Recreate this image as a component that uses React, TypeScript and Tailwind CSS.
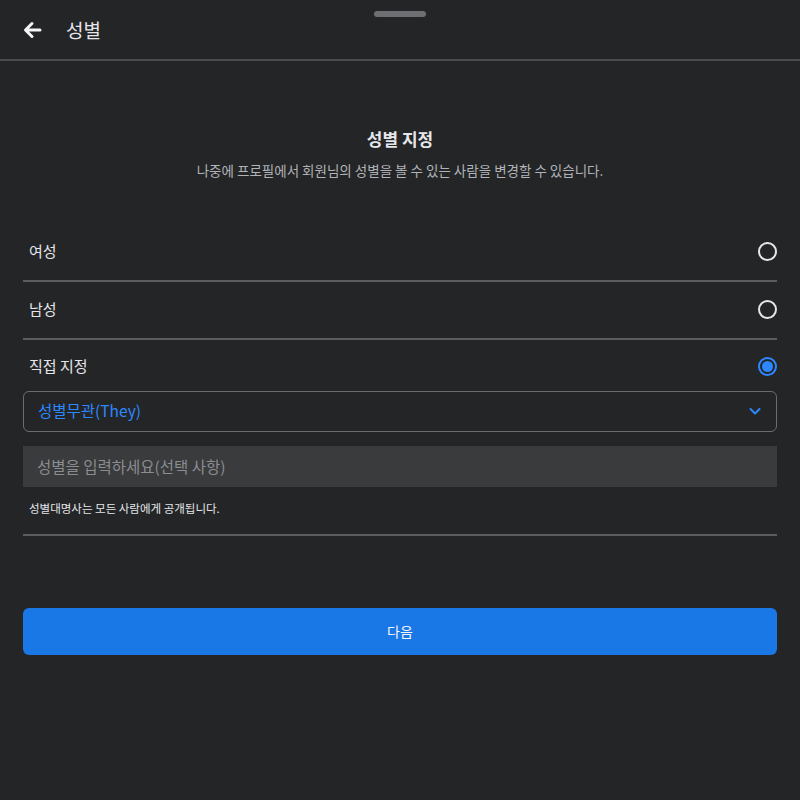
import { useState } from "react";

const options = ["여성", "남성", "직접 지정"];

const Radio = ({ checked }: { checked: boolean }) =>
  checked ? (
    <div className="w-[19px] h-[19px] rounded-full border-2 border-[#2d88ff] flex items-center justify-center">
      <div className="w-[11px] h-[11px] rounded-full bg-[#2d88ff]" />
    </div>
  ) : (
    <div className="w-[19px] h-[19px] rounded-full border-2 border-[#e4e6eb]" />
  );

const App = () => {
  const [selected, setSelected] = useState(2);

  return (
    <div
      className="w-full h-[800px] bg-[#242526] text-[#e4e6eb] flex flex-col"
      style={{ fontFamily: '"Noto Sans CJK KR", "Noto Sans", sans-serif' }}
    >
      {/* header */}
      <div className="relative h-[61px] border-b-2 border-[#4b4c4f] flex items-center px-[22px]">
        <div className="absolute top-[11px] left-[374px] w-[52px] h-[6px] rounded-full bg-[#6e6f72]" />
        <svg width="20" height="20" viewBox="0 0 20 20" className="mt-[1px]">
          <path
            d="M18 10H5M10 3.5L3.5 10L10 16.5"
            fill="none"
            stroke="#f5f6f7"
            strokeWidth="3"
            strokeLinecap="round"
            strokeLinejoin="round"
          />
        </svg>
        <h1 className="ml-[24px] text-[19px] leading-none text-[#e4e6eb]">성별</h1>
      </div>

      <div className="px-[23px] flex flex-col">
        {/* title */}
        <div className="pt-[69px] flex flex-col items-center">
          <h2 className="text-[17px] font-bold leading-none text-[#e4e6eb]">성별 지정</h2>
          <p className="mt-[17px] text-[13.5px] leading-none text-[#b0b3b8]">
            나중에 프로필에서 회원님의 성별을 볼 수 있는 사람을 변경할 수 있습니다.
          </p>
        </div>

        {/* options */}
        <div className="mt-[46px] flex flex-col">
          {options.map((label, i) => {
            const last = i === options.length - 1;
            return (
              <div
                key={label}
                onClick={() => setSelected(i)}
                className={`flex items-center justify-between pl-[6px] cursor-pointer ${
                  last ? "h-[51px] pt-[2px]" : "h-[58px] border-b-2 border-[#5b5c5f]"
                }`}
              >
                <span className="text-[15px] text-[#e4e6eb]">{label}</span>
                <Radio checked={selected === i} />
              </div>
            );
          })}
        </div>

        {/* custom */}
        <div className="flex flex-col">
          <div className="h-[41px] rounded-[6px] border border-[#6b6c6f] flex items-center justify-between px-[14px]">
            <span className="text-[15.5px] text-[#2d88ff]">성별무관(They)</span>
            <svg width="14" height="14" viewBox="0 0 14 14">
              <path
                d="M2.5 5L7 9.5L11.5 5"
                fill="none"
                stroke="#2d88ff"
                strokeWidth="2"
                strokeLinecap="round"
                strokeLinejoin="round"
              />
            </svg>
          </div>
          <input
            placeholder="성별을 입력하세요(선택 사항)"
            className="mt-[14px] h-[41px] bg-[#3a3b3c] px-[14px] text-[15.5px] text-[#e4e6eb] placeholder:text-[#8a8d91] outline-none"
          />
          <p className="mt-[13px] pl-[6px] text-[11.5px] text-[#e4e6eb]">성별대명사는 모든 사람에게 공개됩니다.</p>
          <div className="mt-[17px] border-b-2 border-[#5b5c5f]" />
        </div>

        <button className="mt-[72px] h-[47px] rounded-[6px] bg-[#1a77e6] text-[14px] text-[#f5f6f7]">
          다음
        </button>
      </div>
    </div>
  );
};

export default App;
